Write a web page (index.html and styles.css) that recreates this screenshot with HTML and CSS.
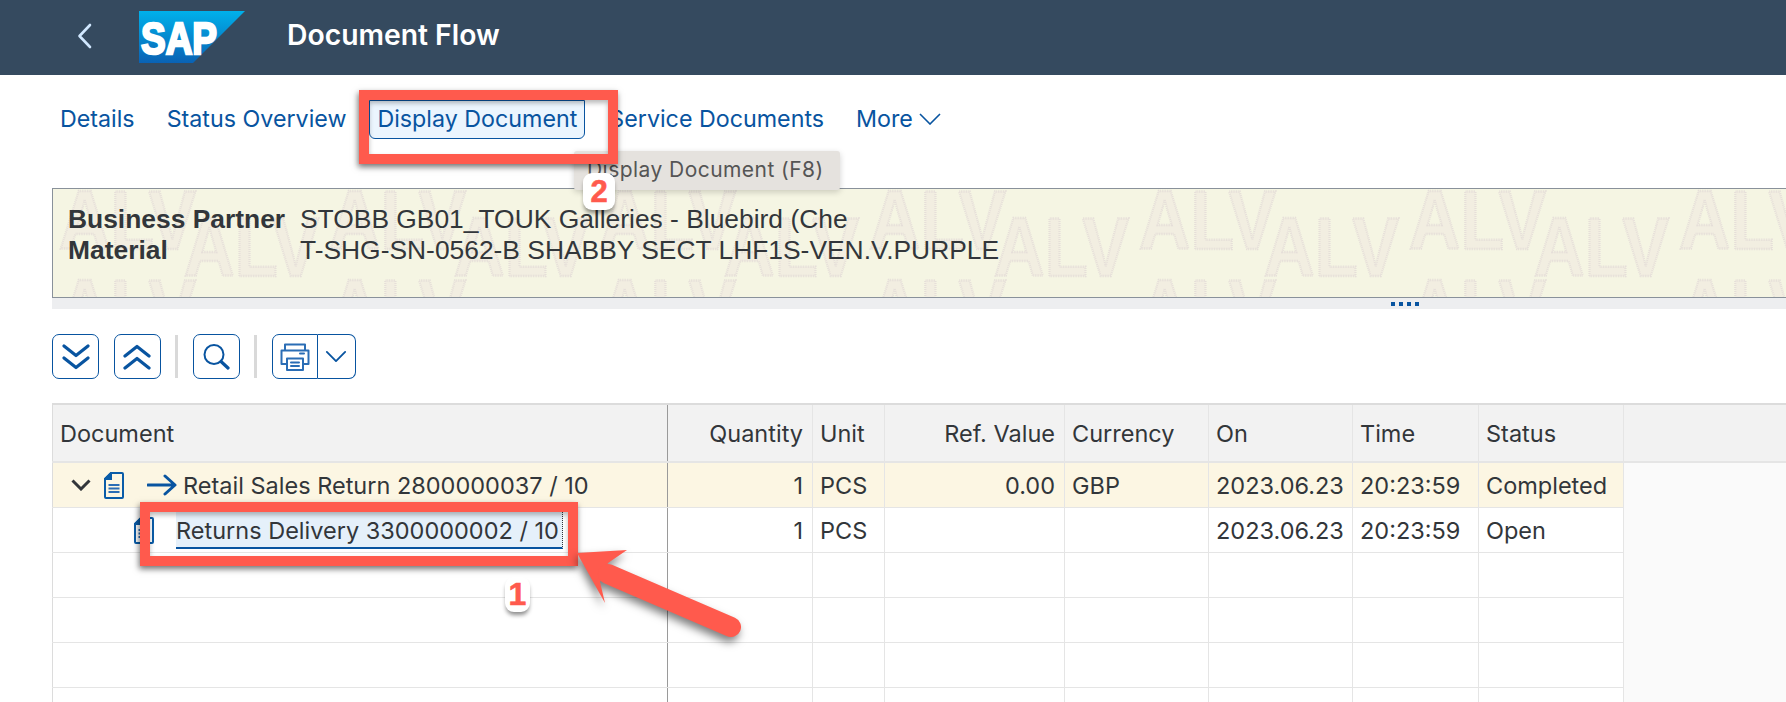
FILE: index.html
```html
<!DOCTYPE html>
<html lang="en">
<head>
<meta charset="utf-8">
<title>Document Flow</title>
<link rel="stylesheet" href="styles.css">
</head>
<body>
<header class="shell">
  <svg class="back" viewBox="0 0 15 26"><path d="M13 2 2.5 13 13 24"/></svg>
  <svg class="logo" viewBox="0 0 106 52">
    <defs><linearGradient id="sapg" x1="0" y1="0" x2="0" y2="1"><stop offset="0" stop-color="#00b1eb"/><stop offset="1" stop-color="#0a62b4"/></linearGradient></defs>
    <polygon points="0,0 106,0 54,52 0,52" fill="url(#sapg)"/>
    <text class="logo-text" x="2" y="43" textLength="76" lengthAdjust="spacingAndGlyphs">SAP</text>
  </svg>
  <h1 class="title">Document Flow</h1>
</header>

<nav class="menu">
  <a class="menu-item">Details</a>
  <a class="menu-item">Status Overview</a>
  <a class="menu-item menu-active">Display Document</a>
  <a class="menu-item">Service Documents</a>
  <a class="menu-item">More<svg class="more-chev" viewBox="0 0 22 12"><path d="M1 1l10 10L21 1"/></svg></a>
</nav>

<section class="panel">
  <svg class="watermark" width="100%" height="100%">
    <defs>
      <pattern id="alv" width="270" height="89" patternUnits="userSpaceOnUse">
        <text class="wm" x="6" y="60" textLength="137" lengthAdjust="spacingAndGlyphs">ALV</text>
        <text class="wm" x="131" y="87" textLength="135" lengthAdjust="spacingAndGlyphs">ALV</text>
      </pattern>
    </defs>
    <rect width="100%" height="100%" fill="url(#alv)"/>
  </svg>
  <dl class="facts">
    <dt>Business Partner</dt><dd>STOBB GB01_TOUK Galleries - Bluebird (Che</dd>
    <dt>Material</dt><dd>T-SHG-SN-0562-B SHABBY SECT LHF1S-VEN.V.PURPLE</dd>
  </dl>
</section>
<div class="splitter"><span class="grip"><i></i><i></i><i></i><i></i></span></div>

<div class="tools">
  <button class="tool"><svg viewBox="0 0 28 28"><path d="M2 3l12 9.500L26 3M2 15l12 9.500L26 15"/></svg></button>
  <button class="tool"><svg viewBox="0 0 28 28"><path d="M2 13L14 3.500 26 13M2 25l12-9.500L26 25"/></svg></button>
  <span class="sep"></span>
  <button class="tool"><svg viewBox="0 0 28 28"><circle cx="12" cy="11.500" r="9.500" class="thin"/><path d="M19 18.500l7 6.500"/></svg></button>
  <span class="sep"></span>
  <div class="split">
    <button class="tool tool-main"><svg viewBox="0 0 30 28"><path class="thin print" d="M5 7V1.500h20V7M7 21H1.500V7.500h27V21H23M7 15.500h16V27H7zM11 19.500h8M11 23h8M20 10.500h4"/></svg></button>
    <button class="tool tool-arrow"><svg viewBox="0 0 24 14"><path class="thin" d="M2 2l10 10L22 2"/></svg></button>
  </div>
</div>

<table class="flow">
  <colgroup>
    <col class="c-doc"><col class="c-qty"><col class="c-unit"><col class="c-ref"><col class="c-cur"><col class="c-on"><col class="c-time"><col class="c-status"><col>
  </colgroup>
  <thead>
    <tr><th class="doc">Document</th><th class="num">Quantity</th><th>Unit</th><th class="num">Ref. Value</th><th>Currency</th><th>On</th><th>Time</th><th>Status</th><th class="rest"></th></tr>
  </thead>
  <tbody>
    <tr class="lead">
      <td class="doc"><div class="tree">
        <svg class="twist" viewBox="0 0 20 12"><path d="M1.500 1.500 10 10l8.500-8.500"/></svg>
        <svg class="page" viewBox="0 0 20 27"><path d="M7 1h11a1 1 0 0 1 1 1v23a1 1 0 0 1-1 1H2a1 1 0 0 1-1-1V7z"/><path class="fold" d="M7 1v6H1z"/><path class="lines" d="M4.500 13h11M4.500 16.500h11M4.500 20h11"/></svg>
        <svg class="go" viewBox="0 0 30 22"><path d="M1 11h26M18 2l10 9-10 9"/></svg>
        <span>Retail Sales Return 2800000037 / 10</span>
      </div></td>
      <td class="num">1</td><td>PCS</td><td class="num">0.00</td><td>GBP</td><td>2023.06.23</td><td>20:23:59</td><td>Completed</td><td class="rest"></td>
    </tr>
    <tr>
      <td class="doc"><div class="tree tree-child">
        <svg class="page" viewBox="0 0 20 27"><path d="M7 1h11a1 1 0 0 1 1 1v23a1 1 0 0 1-1 1H2a1 1 0 0 1-1-1V7z"/><path class="fold" d="M7 1v6H1z"/><path class="lines" d="M4.500 13h11M4.500 16.500h11M4.500 20h11"/></svg>
        <span class="focus">Returns Delivery 3300000002 / 10</span>
      </div></td>
      <td class="num">1</td><td>PCS</td><td></td><td></td><td>2023.06.23</td><td>20:23:59</td><td>Open</td><td class="rest"></td>
    </tr>
    <tr><td class="doc"></td><td></td><td></td><td></td><td></td><td></td><td></td><td></td><td class="rest"></td></tr>
    <tr><td class="doc"></td><td></td><td></td><td></td><td></td><td></td><td></td><td></td><td class="rest"></td></tr>
    <tr><td class="doc"></td><td></td><td></td><td></td><td></td><td></td><td></td><td></td><td class="rest"></td></tr>
    <tr><td class="doc"></td><td></td><td></td><td></td><td></td><td></td><td></td><td></td><td class="rest"></td></tr>
  </tbody>
</table>

<div class="tooltip">Display Document (F8)</div>
<div class="mark mark-doc"></div>
<div class="mark mark-row"></div>
<svg class="pointer" viewBox="0 0 180 100"><polygon points="3,3 53,0 34,13 26,32 31,53"/><line x1="34" y1="24" x2="157" y2="77"/></svg>
<div class="badge badge-two">2</div>
<div class="badge badge-one">1</div>
</body>
</html>
```
FILE: styles.css
```css
* { box-sizing: border-box; }
html, body { margin: 0; height: 702px; overflow: hidden; background: #fff; }
body { position: relative; font-family: Inter, "Open Sans", sans-serif; color: #32363a; width: 1786px; }

.shell { height: 75px; background: #354a5f; display: flex; align-items: center; padding-left: 77px; }
.back { width: 15px; height: 26px; margin-top: -4px; }
.back path { fill: none; stroke: #d1e8ff; stroke-width: 2.6; stroke-linecap: round; stroke-linejoin: round; }
.logo { width: 106px; height: 52px; margin-left: 47px; margin-top: -1px; }
.logo-text { font-family: "Liberation Sans", sans-serif; font-weight: 700; font-size: 44px; fill: #fff; stroke: #fff; stroke-width: 2.5; }
.title { margin: -6px 0 0 42px; font-size: 28.300px; font-weight: 600; color: #fff; }

.menu { height: 113px; display: flex; align-items: flex-start; padding: 25px 0 0 52px; font-size: 23.250px; color: #0854a0; }
.menu-item { display: flex; align-items: center; height: 39px; padding: 0 8px 3px; margin-right: 16px; white-space: nowrap; }
.menu-active { padding: 0 7px 3px; margin-left: -1px; background: #ebf5fe; border: 1px solid #0854a0; border-radius: 0 0 6px 6px; }
.more-chev { width: 22px; height: 12px; margin-left: 6px; margin-top: 2px; }
.more-chev path { fill: none; stroke: #0854a0; stroke-width: 1.6; }

.panel { position: relative; margin-left: 52px; height: 110px; background: #f5f5e3; border: 1px solid #89919a; border-right: 0; overflow: hidden; }
.watermark { position: absolute; inset: 0; }
.wm { font-family: "Liberation Sans", sans-serif; font-weight: 700; font-size: 84px; fill: #f2eee1; stroke: #e6dfd9; stroke-width: 2.500; stroke-dasharray: 1 1; }
.facts { position: relative; margin: 0; padding: 15px 0 0 15px; display: grid; grid-template-columns: 232px 1fr; font-family: "Liberation Sans", sans-serif; font-size: 26.400px; line-height: 31px; }
.facts dt { font-weight: 700; }
.facts dd { margin: 0; }

.splitter { margin-left: 52px; height: 11px; background: #edeef0; display: flex; align-items: center; padding-left: 1339px; }
.grip { display: flex; gap: 4px; }
.grip i { width: 4px; height: 4px; background: #0854a0; }

.tools { display: flex; align-items: center; gap: 14.500px; height: 45px; margin: 25px 0 24px 52px; }
.tool { width: 47px; height: 45px; margin: 0; padding: 0; background: #fff; border: 1px solid #0854a0; border-radius: 7px; display: flex; align-items: center; justify-content: center; }
.tool svg { width: 28px; height: 28px; }
.tool path, .tool circle { fill: none; stroke: #0854a0; stroke-width: 3.200; stroke-linecap: round; stroke-linejoin: round; }
.tool .thin { stroke-width: 2; }
.tool .print { stroke: #2a6db5; }
.sep { width: 3px; height: 43px; background: #d9d9d9; }
.split { display: flex; }
.tool-main { border-radius: 7px 0 0 7px; width: 46px; }
.tool-main svg { width: 30px; }
.tool-arrow { border-left: 0; border-radius: 0 7px 7px 0; width: 38px; }
.tool-arrow svg { width: 22px; height: 13px; }

.flow { table-layout: fixed; border-collapse: collapse; width: 1734px; margin-left: 52px; font-size: 23.500px; }
.c-doc { width: 615px; } .c-qty { width: 145px; } .c-unit { width: 72px; } .c-ref { width: 180px; }
.c-cur { width: 144px; } .c-on { width: 144px; } .c-time { width: 126px; } .c-status { width: 145px; }
.flow th { height: 58px; background: #f2f2f2; font-weight: 400; text-align: left; padding: 0 7px; border: 1px solid #e5e5e5; border-top: 2px solid #dcdcdc; border-bottom: 2px solid #e5e5e5; white-space: nowrap; }
.flow td { height: 45px; padding: 0 7px; border: 1px solid #e5e5e5; white-space: nowrap; }
.flow .num { text-align: right; padding-right: 9px; }
.flow .doc { border-right: 1px solid #9a9a9a; border-left-color: #dcdcdc; padding: 0; }
.flow th.doc { padding-left: 7px; }
.flow .rest { background: #fafafa; border-left: 1px solid #e5e5e5; border-right: 0; border-top: 0; border-bottom: 0; }
.flow th.rest { background: #f2f2f2; border-top: 2px solid #dcdcdc; border-bottom: 2px solid #e5e5e5; }
.lead td { background: #fcf6e3; }
.lead td.rest { background: #fafafa; }

.tree { display: flex; align-items: center; height: 44px; padding-left: 18px; }
.tree-child { padding-left: 81px; }
.twist { width: 20px; height: 12px; margin-right: 13px; }
.twist path { fill: none; stroke: #32363a; stroke-width: 3; }
.page { width: 20px; height: 27px; }
.page path { fill: none; stroke: #0a5ca8; stroke-width: 2; }
.page .fold { fill: #0a5ca8; }
.page .lines { stroke: #2a6db5; }
.go { width: 30px; height: 22px; margin: 0 6px 0 23px; }
.go path { fill: none; stroke: #0854a0; stroke-width: 3; stroke-linecap: round; stroke-linejoin: round; }
.focus { margin-left: 22px; height: 38px; width: 387px; padding-top: 2px; display: flex; align-items: center; background: #e5f0fa; border-bottom: 2px solid #0854a0; border-right: 1px dotted #32363a; }

.tooltip { position: absolute; left: 574px; top: 151px; width: 266px; height: 39px; padding-left: 13px; background: #e5e2de; border-radius: 3px; box-shadow: 0 2px 6px rgba(0,0,0,.18); color: #555; font-size: 21px; letter-spacing: .45px; line-height: 38px; white-space: nowrap; }
.mark { position: absolute; border: 10px solid #ff5a4d; box-shadow: -1px 3px 6px rgba(0,0,0,.55), inset 0 3px 5px rgba(0,0,0,.28); }
.mark-doc { left: 359px; top: 90px; width: 259px; height: 74px; }
.mark-row { left: 140px; top: 502px; width: 438px; height: 64px; }
.pointer { position: absolute; left: 574px; top: 550px; width: 180px; height: 100px; overflow: visible; filter: drop-shadow(-2px 5px 4px rgba(0,0,0,.5)); }
.pointer polygon { fill: #ff5a4d; }
.pointer line { stroke: #ff5a4d; stroke-width: 20; stroke-linecap: round; }
.badge { position: absolute; display: flex; align-items: center; justify-content: center; background: #fff; border-radius: 9px; color: #ff5a4d; font-family: "Liberation Sans", sans-serif; font-weight: 700; box-shadow: 0 4px 4px -1px rgba(0,0,0,.45); -webkit-text-stroke: .6px #ff5a4d; }
.badge-two { left: 583px; top: 173px; width: 32px; height: 37px; font-size: 31px; }
.badge-one { left: 505px; top: 577px; width: 25px; height: 35px; font-size: 32px; }
```
